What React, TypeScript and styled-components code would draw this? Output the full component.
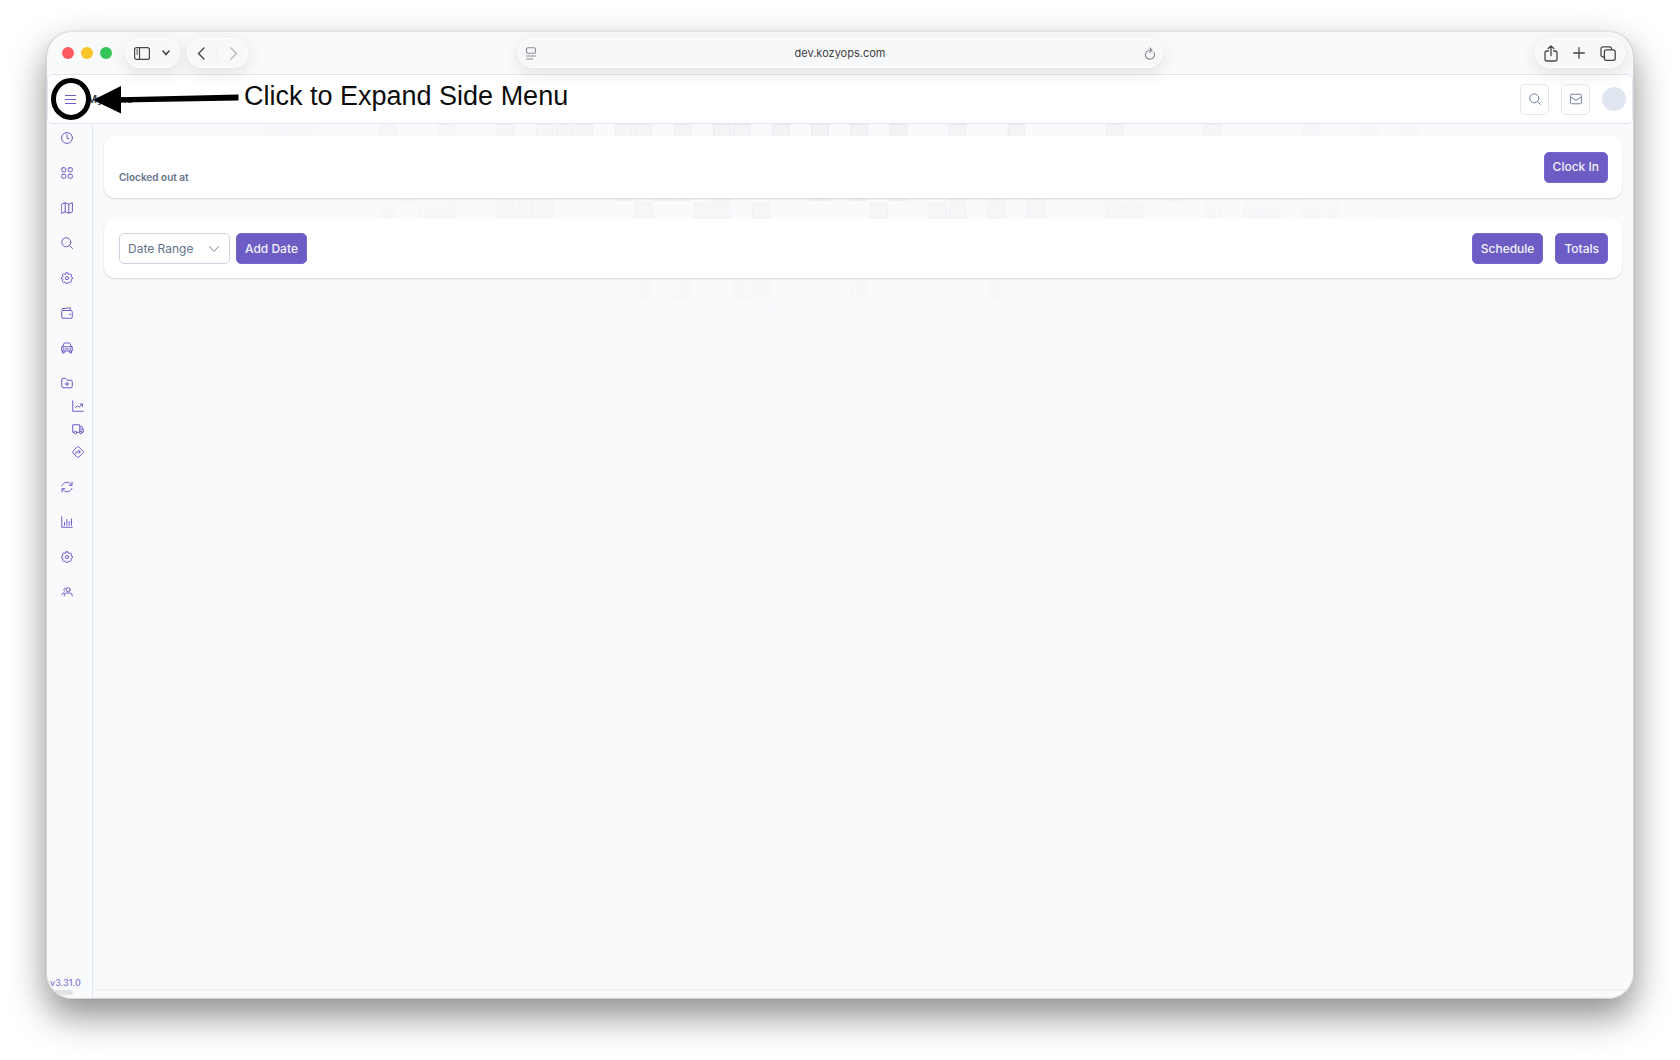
import React from 'react';
import styled, { createGlobalStyle } from 'styled-components';

const GlobalStyle = createGlobalStyle`
  *, *::before, *::after { box-sizing: border-box; }
  body {
    margin: 0;
    background: #ffffff;
    font-family: Inter, "Liberation Sans", sans-serif;
    color: #334155;
  }
  button, input, select { font-family: inherit; margin: 0; }
`;

const Desktop = styled.div`
  display: flex;
  min-height: 100vh;
  padding: 31px 46px 61px;
  overflow: hidden;
`;

const BrowserWindow = styled.div`
  position: relative;
  flex: 1;
  min-width: 0;
  display: flex;
  flex-direction: column;
  border-radius: 26px;
  background: #f9fafc;
  border: 1px solid #d4d5d7;
  border-top-color: #dfe0e1;
  overflow: hidden;
`;

const WindowShadow = styled.div`
  flex: 1;
  min-width: 0;
  display: flex;
  border-radius: 26px;
  box-shadow: 0 17px 36px rgba(0, 0, 0, 0.45), 0 0 1px rgba(0, 0, 0, 0.3);
`;

const Toolbar = styled.div`
  position: relative;
  z-index: 2;
  display: grid;
  grid-template-columns: 1fr minmax(0, 645px) 1fr;
  align-items: center;
  height: 42px;
  padding: 0 8px;
`;

const ToolbarStart = styled.div`
  display: flex;
  align-items: center;
  gap: 7px;
`;

const ToolbarEnd = styled.div`
  display: flex;
  justify-content: flex-end;
`;

const Lights = styled.div`
  display: flex;
  gap: 7px;
  margin: 0 6px 0 7px;
`;

const Light = styled.span<{ $color: string }>`
  width: 12px;
  height: 12px;
  border-radius: 50%;
  background: ${(p) => p.$color};
`;

const Pill = styled.div<{ $gap?: number }>`
  display: flex;
  align-items: center;
  gap: ${(p) => p.$gap ?? 12}px;
  height: 30px;
  padding: 0 8px;
  border-radius: 15px;
  border: 1px solid #ffffff;
  background: #f7f8fa;
  box-shadow: 0 5px 18px rgba(0, 0, 0, 0.1);
`;

const Divider = styled.span`
  width: 1px;
  height: 16px;
  background: #ebecee;
`;

const ChromeButton = styled.button<{ $dim?: boolean }>`
  display: flex;
  padding: 0;
  border: 0;
  background: none;
  color: ${(p) => (p.$dim ? '#b9babc' : '#454648')};
`;

const AddressBar = styled(Pill)`
  position: relative;
  padding: 0 6px;
  color: #8a8b8e;
`;

const Address = styled.input`
  flex: 1;
  min-width: 0;
  border: 0;
  padding: 0;
  background: none;
  outline: none;
  text-align: center;
  font-size: 11px;
  line-height: 16px;
  color: #3f4042;
`;

const Header = styled.header`
  display: flex;
  align-items: center;
  height: 50px;
  padding: 0 6px 0 16px;
  border: 1px solid #e1e7f1;
  border-radius: 5px;
  background: #ffffff;
`;

const MenuButton = styled.button`
  display: flex;
  padding: 0;
  border: 0;
  background: none;
  color: #6c5cc7;
`;

const PageTitle = styled.h1`
  margin: 0 auto 0 10px;
  font-size: 11px;
  line-height: 16px;
  font-weight: 600;
  color: #334155;
`;

const HeaderActions = styled.div`
  display: flex;
  align-items: center;
  gap: 12px;
`;

const IconButton = styled.button`
  display: flex;
  align-items: center;
  justify-content: center;
  width: 29px;
  height: 31px;
  padding: 0;
  border: 1px solid #e2e8f0;
  border-radius: 5px;
  background: #ffffff;
  color: #74839a;
`;

const Avatar = styled.span`
  width: 24px;
  height: 24px;
  border-radius: 50%;
  background: #e0e6ef;
`;

const Body = styled.div`
  flex: 1;
  display: flex;
  min-height: 0;
`;

const Sidebar = styled.nav`
  display: flex;
  flex-direction: column;
  justify-content: space-between;
  width: 46px;
  padding-top: 2px;
  border-right: 1px solid #e3e5f3;
`;

const NavList = styled.ul`
  display: flex;
  flex-direction: column;
  gap: 12px;
  margin: 0;
  padding: 0;
  list-style: none;
`;

const SubList = styled.ul`
  margin: 0;
  padding: 0 0 0 11px;
  list-style: none;
`;

const NavLink = styled.a`
  display: flex;
  align-items: center;
  height: 23px;
  padding-left: 14px;
  color: #6c5cc7;
`;

const SidebarFoot = styled.div`
  font-size: 9px;
  line-height: 12px;
  font-weight: 500;
  color: #8377d3;
  padding-left: 3px;
`;

const ScrollThumb = styled.div`
  width: 26px;
  height: 5px;
  margin: 1px 0 3px;
  border-radius: 3px;
  background: #e2e3e5;
`;

const Main = styled.main`
  position: relative;
  flex: 1;
  min-width: 0;
  display: flex;
  flex-direction: column;
`;

const Backdrop = styled.svg`
  position: absolute;
  top: 0;
  left: 0;
  width: 100%;
  height: 200px;
`;

const Content = styled.div`
  position: relative;
  flex: 1;
  display: flex;
  flex-direction: column;
  gap: 21px;
  padding: 12px 11px;
`;

const Card = styled.section<{ $height: number }>`
  display: flex;
  align-items: center;
  justify-content: space-between;
  min-height: ${(p) => p.$height}px;
  padding: 0 14px 0 15px;
  border-radius: 11px;
  background: #ffffff;
  box-shadow: 0 1px 2px rgba(0, 0, 0, 0.14);
`;

const ClockStatus = styled.p`
  align-self: flex-end;
  margin: 0 0 13px;
  font-size: 10px;
  line-height: 16px;
  font-weight: 600;
  color: #64748b;
`;

const Group = styled.div<{ $gap: number }>`
  display: flex;
  gap: ${(p) => p.$gap}px;
`;

const Button = styled.button`
  height: 31px;
  padding: 0 8px;
  border: 1px solid #7566ca;
  border-radius: 5px;
  background: #6c5cc4;
  color: #f4f2fd;
  font-size: 12px;
  line-height: 16px;
  font-weight: 500;
`;

const SelectBox = styled.label`
  position: relative;
  display: flex;
  width: 111px;
  height: 31px;
  color: #74839a;
`;

const RangeSelect = styled.select`
  appearance: none;
  width: 100%;
  padding: 0 28px 0 8px;
  border: 1px solid #cbd5e1;
  border-radius: 5px;
  background: #ffffff;
  color: #64748b;
  font-size: 12px;
  line-height: 16px;
`;

const SelectArrow = styled.svg`
  position: absolute;
  right: 10px;
  top: 10px;
  pointer-events: none;
`;

const BottomTrack = styled.div`
  position: relative;
  height: 9px;
  margin-left: 2px;
  border-top: 2px solid #f1f2f4;
  border-bottom: 1px solid #eeeff1;
`;

const Annotation = styled.div`
  position: absolute;
  z-index: 3;
  top: 43px;
  left: 2px;
  display: flex;
  align-items: flex-start;
  gap: 5px;
  pointer-events: none;
`;

const AnnotationText = styled.p`
  margin: 6px 0 0;
  font-family: "Liberation Sans", Arial, sans-serif;
  font-size: 27px;
  line-height: 31px;
  color: #0c0c0c;
  white-space: nowrap;
`;

type IconProps = { size?: number; width?: number; children: React.ReactNode };

/* Line icon on a 24-unit grid */
const Icon = ({ size = 12, width = 2, children }: IconProps) => (
  <svg
    width={size}
    height={size}
    viewBox="0 0 24 24"
    fill="none"
    stroke="currentColor"
    strokeWidth={width}
    strokeLinecap="round"
    strokeLinejoin="round"
    aria-hidden="true"
  >
    {children}
  </svg>
);

const gear = (
  <>
    <path d="M10.2 1.5h3.6l.8 2.8 1.7.7 2.5-1.4 2.6 2.6L20 8.700l.7 1.700 2.300.600v2.800l-2.300.700-.7 1.700 1.400 2.500-2.600 2.600-2.500-1.400-1.700.700-.8 2.800h-3.600l-.8-2.800-1.700-.7-2.500 1.400-2.600-2.600L4 15.900l-.7-1.700L1 13.700v-2.800l2.300-.700L4 8.500 2.600 6.100l2.600-2.600 2.500 1.400 1.700-.7z" />
    <circle cx="12" cy="12.200" r="3.200" />
  </>
);

const icons = {
  clock: (
    <>
      <circle cx="12" cy="12" r="10.800" />
      <path d="M12 5.500V12.500l4.200 1.500" />
    </>
  ),
  grid: (
    <>
      <rect x="1.500" y="1.500" width="8" height="8" rx="2" />
      <rect x="14.500" y="1.500" width="8" height="8" rx="2" />
      <rect x="1.500" y="14.500" width="8" height="8" rx="2" />
      <rect x="14.500" y="14.500" width="8" height="8" rx="2" />
    </>
  ),
  map: <path d="M1.200 4.500 8.400 1.500l7.200 3 7.200-3v18l-7.200 3-7.200-3-7.200 3zM8.400 1.500v18M15.600 4.500v18" />,
  search: (
    <>
      <circle cx="10.500" cy="10.500" r="9" />
      <path d="m17 17 6 6" />
    </>
  ),
  gear,
  wallet: (
    <>
      <path d="M1.500 8.500V20a2.500 2.500 0 0 0 2.500 2.500h16a2.500 2.500 0 0 0 2.500-2.500V9.500A2.500 2.500 0 0 0 20 7H3.500a2 2 0 0 1-1.300-3.500L18.500 1.500V7" />
      <path d="M17.800 14.500v1.200" strokeWidth="2.600" />
    </>
  ),
  car: (
    <>
      <path d="M3.500 9.500 5.500 3.500a2 2 0 0 1 2-1.500h9a2 2 0 0 1 2 1.500l2 6M1.500 9.500h21M3.500 9.500a2 2 0 0 0-2 2V18h21v-6.500a2 2 0 0 0-2-2M3 18v4h3.500v-4M17.500 18v4H21v-4M9 14h6" />
      <path d="M5.500 13.500v.800M18.500 13.500v.800" strokeWidth="2.600" />
    </>
  ),
  folder: <path d="M1.500 5A2.500 2.500 0 0 1 4 2.500h4.500L12 6.500h8A2.500 2.500 0 0 1 22.500 9v10a2.500 2.500 0 0 1-2.500 2.500H4A2.500 2.500 0 0 1 1.500 19zM12 10.500v7M8.500 14h7" />,
  trend: <path d="M1.500 1.500v21h21M6.500 15.500l4-4 3.500 3 6.500-6M16.500 8h4.500v4.500" />,
  truck: (
    <>
      <path d="M4 18.500H1.500v-15h14v15h-5.500M15.500 7.500H20l2.500 5v6h-2" />
      <path d="M17.500 12.500h4" />
      <circle cx="7" cy="19" r="2.600" />
      <circle cx="17.800" cy="19" r="2.600" />
    </>
  ),
  directions: <path d="M10.500 1.700a2 2 0 0 1 3 0l8.800 8.800a2 2 0 0 1 0 3l-8.800 8.800a2 2 0 0 1-3 0l-8.800-8.800a2 2 0 0 1 0-3zM7.500 15.500v-2a2 2 0 0 1 2-2h6.500M13.500 8.200l3.200 3.300-3.200 3.200" />,
  sync: <path d="M2 9.500C3.500 5 7.500 2.500 12 2.500c4 0 7 2 9 5.500M22 2v6.500h-6M22 14.500c-1.500 4.500-5.500 7-10 7-4 0-7-2-9-5.500M2 22v-6.500h6" />,
  bars: <path d="M1.500 1.500v21h21M7 13v5.500M11.700 7v11.500M16.400 11v7.500M21 6v12.500" />,
  users: (
    <>
      <circle cx="14.500" cy="7.500" r="4" />
      <path d="M6.500 20v-1a5 5 0 0 1 5-5h6a5 5 0 0 1 5 5v1M9 4.300a3.300 3.300 0 0 0-1.500 6.200M1.500 17.500a5 5 0 0 1 4.500-4" />
    </>
  ),
};

type IconName = keyof typeof icons;
type NavEntry = { icon: IconName; label: string; children?: { icon: IconName; label: string }[] };

const navEntries: NavEntry[] = [
  { icon: 'clock', label: 'Time' },
  { icon: 'grid', label: 'Dashboard' },
  { icon: 'map', label: 'Map' },
  { icon: 'search', label: 'Search' },
  { icon: 'gear', label: 'Operations' },
  { icon: 'wallet', label: 'Wallet' },
  { icon: 'car', label: 'Vehicles' },
  {
    icon: 'folder',
    label: 'Projects',
    children: [
      { icon: 'trend', label: 'Trends' },
      { icon: 'truck', label: 'Deliveries' },
      { icon: 'directions', label: 'Routes' },
    ],
  },
  { icon: 'sync', label: 'Sync' },
  { icon: 'bars', label: 'Reports' },
  { icon: 'gear', label: 'Settings' },
  { icon: 'users', label: 'Users' },
];

/* Filled cells of the faint mosaic behind the cards: row number -> columns */
const mosaic: [number, number[]][] = [
  [0, [7, 8, 9, 10, 14, 17, 20, 22, 23, 24, 26, 27, 29, 31, 32, 34, 36, 38, 40, 43, 46, 51, 56, 61, 64, 66, 69]],
  [3, [15, 20, 21, 22, 26, 28, 29, 31, 36, 38, 40, 43, 45, 47, 54, 60]],
  [4, [14, 16, 17, 20, 21, 22, 27, 30, 31, 33, 39, 42, 43, 45, 47, 51, 52, 56, 58, 59, 61, 62, 65]],
  [8, [21, 27, 29, 32, 33, 38, 45, 49, 52]],
  [9, [33, 34, 36, 38, 39, 40]],
];

const cellOpacity = (row: number, col: number) =>
  Math.max(0.1, 1 - Math.abs(col - 37) / 34) * (1 - row / 10);

const Mosaic = () => (
  <Backdrop aria-hidden="true">
    {mosaic.map(([row, cols]) =>
      cols.map((col) => (
        <rect
          key={`${row}-${col}`}
          x={11.7 + col * 19.64}
          y={0.5 + row * 19.6}
          width="16.600"
          height="17"
          fill="#f2f3f5"
          stroke="#e9eaec"
          opacity={cellOpacity(row, col)}
        />
      )),
    )}
  </Backdrop>
);

export default function App() {
  return (
    <>
      <GlobalStyle />
      <Desktop>
        <WindowShadow>
          <BrowserWindow>
            <Toolbar>
              <ToolbarStart>
                <Lights>
                  <Light $color="#ff5a5f" />
                  <Light $color="#fac42d" />
                  <Light $color="#35c558" />
                </Lights>
                <Pill $gap={11}>
                  <ChromeButton aria-label="Show sidebar">
                    <svg width="16" height="13" viewBox="0 0 16 13" fill="none" stroke="currentColor" strokeWidth="1.200">
                      <rect x="0.600" y="0.600" width="14.800" height="11.800" rx="2" />
                      <path d="M5.500 0.600v11.800M2.200 3h1.800M2.200 5h1.800M2.200 7h1.800" />
                    </svg>
                  </ChromeButton>
                  <ChromeButton aria-label="Tab groups">
                    <svg width="10" height="6" viewBox="0 0 10 6" fill="none" stroke="currentColor" strokeWidth="1.600" strokeLinecap="round">
                      <path d="m2 1 3 3.500L8 1" />
                    </svg>
                  </ChromeButton>
                </Pill>
                <Pill $gap={11}>
                  <ChromeButton aria-label="Back">
                    <svg width="10" height="13" viewBox="0 0 10 13" fill="none" stroke="currentColor" strokeWidth="1.400" strokeLinecap="round">
                      <path d="M8 1 2.500 6.500 8 12" />
                    </svg>
                  </ChromeButton>
                  <Divider />
                  <ChromeButton aria-label="Forward" $dim>
                    <svg width="10" height="13" viewBox="0 0 10 13" fill="none" stroke="currentColor" strokeWidth="1.400" strokeLinecap="round">
                      <path d="m2 1 5.500 5.500L2 12" />
                    </svg>
                  </ChromeButton>
                </Pill>
              </ToolbarStart>
              <AddressBar>
                <svg width="12" height="13" viewBox="0 0 12 13" fill="none" stroke="currentColor" strokeWidth="1.100" strokeLinecap="round">
                  <rect x="1.500" y="0.700" width="9" height="5.600" rx="1.500" />
                  <path d="M1.500 9h9M1.500 12h6" />
                </svg>
                <Address aria-label="Address" defaultValue="dev.kozyops.com" />
                <svg width="12" height="13" viewBox="0 0 12 13" fill="none" stroke="currentColor" strokeWidth="1.100" strokeLinecap="round" strokeLinejoin="round">
                  <path d="M9.700 5.200A4.500 4.500 0 1 1 6 3.200h1.500M5.800 1l2.200 2.200-2.200 2.200" />
                </svg>
              </AddressBar>
              <ToolbarEnd>
                <Pill $gap={15}>
                  <ChromeButton aria-label="Share">
                    <svg width="14" height="17" viewBox="0 0 14 17" fill="none" stroke="currentColor" strokeWidth="1.300" strokeLinecap="round" strokeLinejoin="round">
                      <path d="M4.500 6H3a2 2 0 0 0-2 2v6a2 2 0 0 0 2 2h8a2 2 0 0 0 2-2V8a2 2 0 0 0-2-2H9.500M7 10.500V1M4.200 3.600 7 1l2.800 2.600" />
                    </svg>
                  </ChromeButton>
                  <ChromeButton aria-label="New tab">
                    <svg width="12" height="12" viewBox="0 0 12 12" fill="none" stroke="currentColor" strokeWidth="1.300" strokeLinecap="round">
                      <path d="M6 .700v10.600M.700 6h10.600" />
                    </svg>
                  </ChromeButton>
                  <ChromeButton aria-label="Tab overview">
                    <svg width="16" height="15" viewBox="0 0 16 15" fill="none" stroke="currentColor" strokeWidth="1.300">
                      <rect x="4.400" y="3.900" width="10.800" height="10.400" rx="2" />
                      <path d="M4.400 11H3a2 2 0 0 1-2-2V2.800a2 2 0 0 1 2-2h6.500a2 2 0 0 1 2 2v1.100" />
                    </svg>
                  </ChromeButton>
                </Pill>
              </ToolbarEnd>
            </Toolbar>

            <Header>
              <MenuButton aria-label="Expand side menu">
                <svg width="13" height="11" viewBox="0 0 13 11" fill="none" stroke="currentColor">
                  <path d="M1 1.500h11M1 5.500h11M1 9.500h11" />
                </svg>
              </MenuButton>
              <PageTitle>My Time</PageTitle>
              <HeaderActions>
                <IconButton aria-label="Search">
                  <Icon>{icons.search}</Icon>
                </IconButton>
                <IconButton aria-label="Messages">
                  <Icon>
                    <rect x="1.200" y="2.500" width="21.600" height="19" rx="2" />
                    <path d="m1.500 8 8.500 5.500a4 4 0 0 0 4 0L22.500 8" />
                  </Icon>
                </IconButton>
                <Avatar />
              </HeaderActions>
            </Header>

            <Body>
              <Sidebar aria-label="Main">
                <NavList>
                  {navEntries.map((entry) => (
                    <li key={entry.label}>
                      <NavLink href="#" aria-label={entry.label}>
                        <Icon>{icons[entry.icon]}</Icon>
                      </NavLink>
                      {entry.children && (
                        <SubList>
                          {entry.children.map((child) => (
                            <li key={child.label}>
                              <NavLink href="#" aria-label={child.label}>
                                <Icon>{icons[child.icon]}</Icon>
                              </NavLink>
                            </li>
                          ))}
                        </SubList>
                      )}
                    </li>
                  ))}
                </NavList>
                <div>
                  <SidebarFoot>v3.31.0</SidebarFoot>
                  <ScrollThumb />
                </div>
              </Sidebar>

              <Main>
                <Mosaic />
                <Content>
                  <Card $height={62}>
                    <ClockStatus>Clocked out at</ClockStatus>
                    <Button>Clock In</Button>
                  </Card>
                  <Card $height={59}>
                    <Group $gap={6}>
                      <SelectBox>
                        <RangeSelect aria-label="Date Range">
                          <option>Date Range</option>
                        </RangeSelect>
                        <SelectArrow width="12" height="12" viewBox="0 0 12 12" fill="none" stroke="currentColor" strokeLinecap="round" strokeLinejoin="round">
                          <path d="m1.500 3.500 4.500 5 4.500-5" />
                        </SelectArrow>
                      </SelectBox>
                      <Button>Add Date</Button>
                    </Group>
                    <Group $gap={12}>
                      <Button>Schedule</Button>
                      <Button>Totals</Button>
                    </Group>
                  </Card>
                </Content>
                <BottomTrack />
              </Main>
            </Body>

            <Annotation>
              <svg width="190" height="46" viewBox="0 0 190 46" aria-hidden="true">
                <ellipse cx="22" cy="24" rx="17.500" ry="18.500" fill="none" stroke="#000" strokeWidth="5" />
                <path d="M44 25 72 11v11.300l117.500-2.800v6L72 27.500V38.500z" fill="#000" />
              </svg>
              <AnnotationText>Click to Expand Side Menu</AnnotationText>
            </Annotation>
          </BrowserWindow>
        </WindowShadow>
      </Desktop>
    </>
  );
}
